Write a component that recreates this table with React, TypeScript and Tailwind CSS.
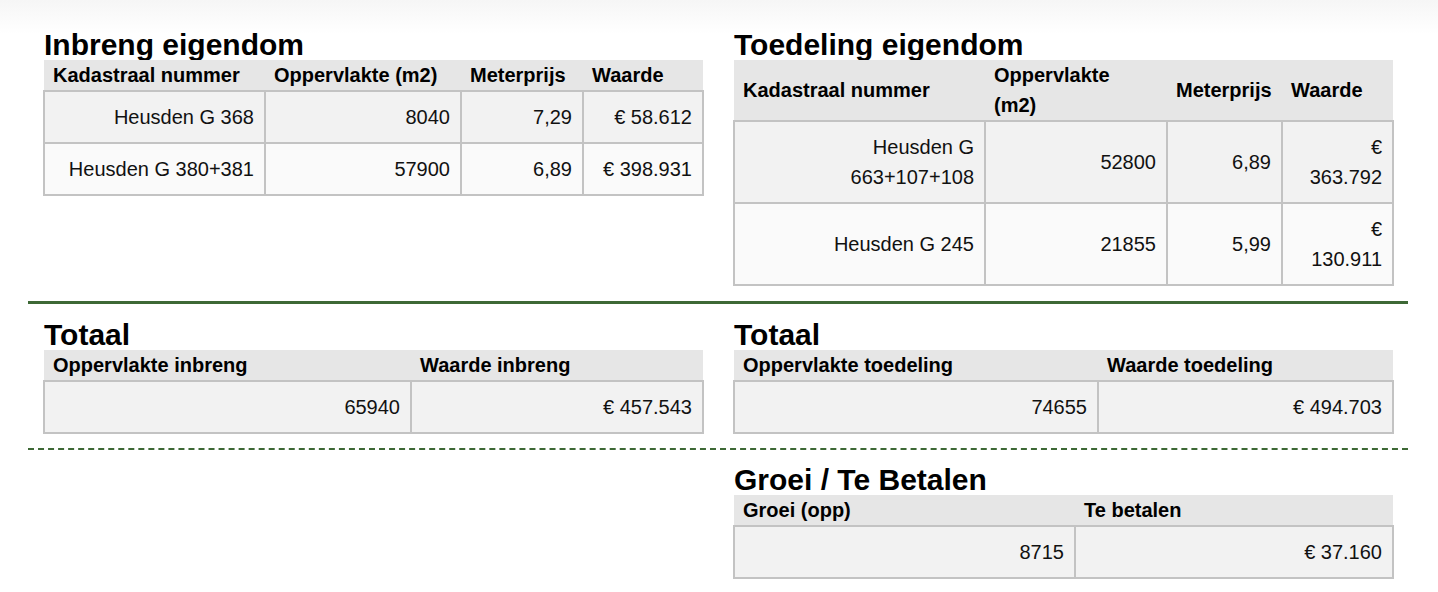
// App.tsx — ruilverkaveling overzicht: inbreng, toedeling, totalen en groei.

import React from 'react';

/* ------------------------------------------------------------------ */
/*  Types                                                              */
/* ------------------------------------------------------------------ */

interface Column {
  label: React.ReactNode;
  width: number;
}

type Cell = React.ReactNode;

/* ------------------------------------------------------------------ */
/*  Data                                                               */
/* ------------------------------------------------------------------ */

const INBRENG_COLS: Column[] = [
  { label: 'Kadastraal nummer', width: 221 },
  { label: 'Oppervlakte (m2)', width: 196 },
  { label: 'Meterprijs', width: 122 },
  { label: 'Waarde', width: 120 },
];

const INBRENG_ROWS: Cell[][] = [
  ['Heusden G 368', '8040', '7,29', '€ 58.612'],
  ['Heusden G 380+381', '57900', '6,89', '€ 398.931'],
];

const TOEDELING_COLS: Column[] = [
  { label: 'Kadastraal nummer', width: 251 },
  { label: <>Oppervlakte<br />(m2)</>, width: 182 },
  { label: 'Meterprijs', width: 115 },
  { label: 'Waarde', width: 111 },
];

const TOEDELING_ROWS: Cell[][] = [
  [<>Heusden G<br />663+107+108</>, '52800', '6,89', <>€<br />363.792</>],
  ['Heusden G 245', '21855', '5,99', <>€<br />130.911</>],
];

/* ------------------------------------------------------------------ */
/*  Building blocks                                                    */
/* ------------------------------------------------------------------ */

function SectionTitle({ children }: { children: React.ReactNode }) {
  return <h2 className="text-[30px] font-bold leading-[30px] text-black">{children}</h2>;
}

function DataTable({ columns, rows }: { columns: Column[]; rows: Cell[][] }) {
  return (
    <table className="-ml-px w-[659px] table-fixed border-collapse text-[20px] leading-[30px] text-[#111]">
      <colgroup>
        {columns.map((c, i) => (
          <col key={i} style={{ width: c.width }} />
        ))}
      </colgroup>
      <thead>
        <tr className="bg-[#e6e6e6]">
          {columns.map((c, i) => (
            <th key={i} className="px-[9px] py-0 text-left align-middle font-bold text-black">
              {c.label}
            </th>
          ))}
        </tr>
      </thead>
      <tbody>
        {rows.map((row, r) => (
          <tr key={r} className={r % 2 === 0 ? 'bg-[#f2f2f2]' : 'bg-[#fafafa]'}>
            {row.map((cell, c) => (
              <td key={c} className="border-2 border-[#c3c3c3] px-[10px] py-[10px] text-right align-middle">
                {cell}
              </td>
            ))}
          </tr>
        ))}
      </tbody>
    </table>
  );
}

function Block({ title, columns, rows }: { title: string; columns: Column[]; rows: Cell[][] }) {
  return (
    <div className="flex flex-col">
      <SectionTitle>{title}</SectionTitle>
      <DataTable columns={columns} rows={rows} />
    </div>
  );
}

/* ------------------------------------------------------------------ */
/*  Main Component                                                     */
/* ------------------------------------------------------------------ */

export default function App() {
  return (
    <div className="min-h-[592px] w-[1438px] bg-[linear-gradient(#f6f6f6,#ffffff_34px)] font-['Liberation_Sans',Arial,sans-serif]">
      <div className="ml-[28px] w-[1380px] pt-[30px]">
        {/* Section 1: Inbreng / Toedeling */}
        <div className="grid grid-cols-[659px_659px] items-start gap-x-[31px] px-[16px]">
          <Block title="Inbreng eigendom" columns={INBRENG_COLS} rows={INBRENG_ROWS} />
          <Block title="Toedeling eigendom" columns={TOEDELING_COLS} rows={TOEDELING_ROWS} />
        </div>

        <div className="mt-[15px] h-[3px] bg-[#3d6835]" />

        {/* Section 2: Totalen */}
        <div className="mt-[16px] grid grid-cols-[659px_659px] items-start gap-x-[31px] px-[16px]">
          <Block
            title="Totaal"
            columns={[
              { label: 'Oppervlakte inbreng', width: 367 },
              { label: 'Waarde inbreng', width: 292 },
            ]}
            rows={[['65940', '€ 457.543']]}
          />
          <Block
            title="Totaal"
            columns={[
              { label: 'Oppervlakte toedeling', width: 364 },
              { label: 'Waarde toedeling', width: 295 },
            ]}
            rows={[['74655', '€ 494.703']]}
          />
        </div>

        <div className="mt-[14px] border-t-2 border-dashed border-[#3d6835]" />

        {/* Section 3: Groei / Te betalen */}
        <div className="mt-[15px] grid grid-cols-[659px_659px] items-start gap-x-[31px] px-[16px]">
          <div />
          <Block
            title="Groei / Te Betalen"
            columns={[
              { label: 'Groei (opp)', width: 341 },
              { label: 'Te betalen', width: 318 },
            ]}
            rows={[['8715', '€ 37.160']]}
          />
        </div>
      </div>
    </div>
  );
}
